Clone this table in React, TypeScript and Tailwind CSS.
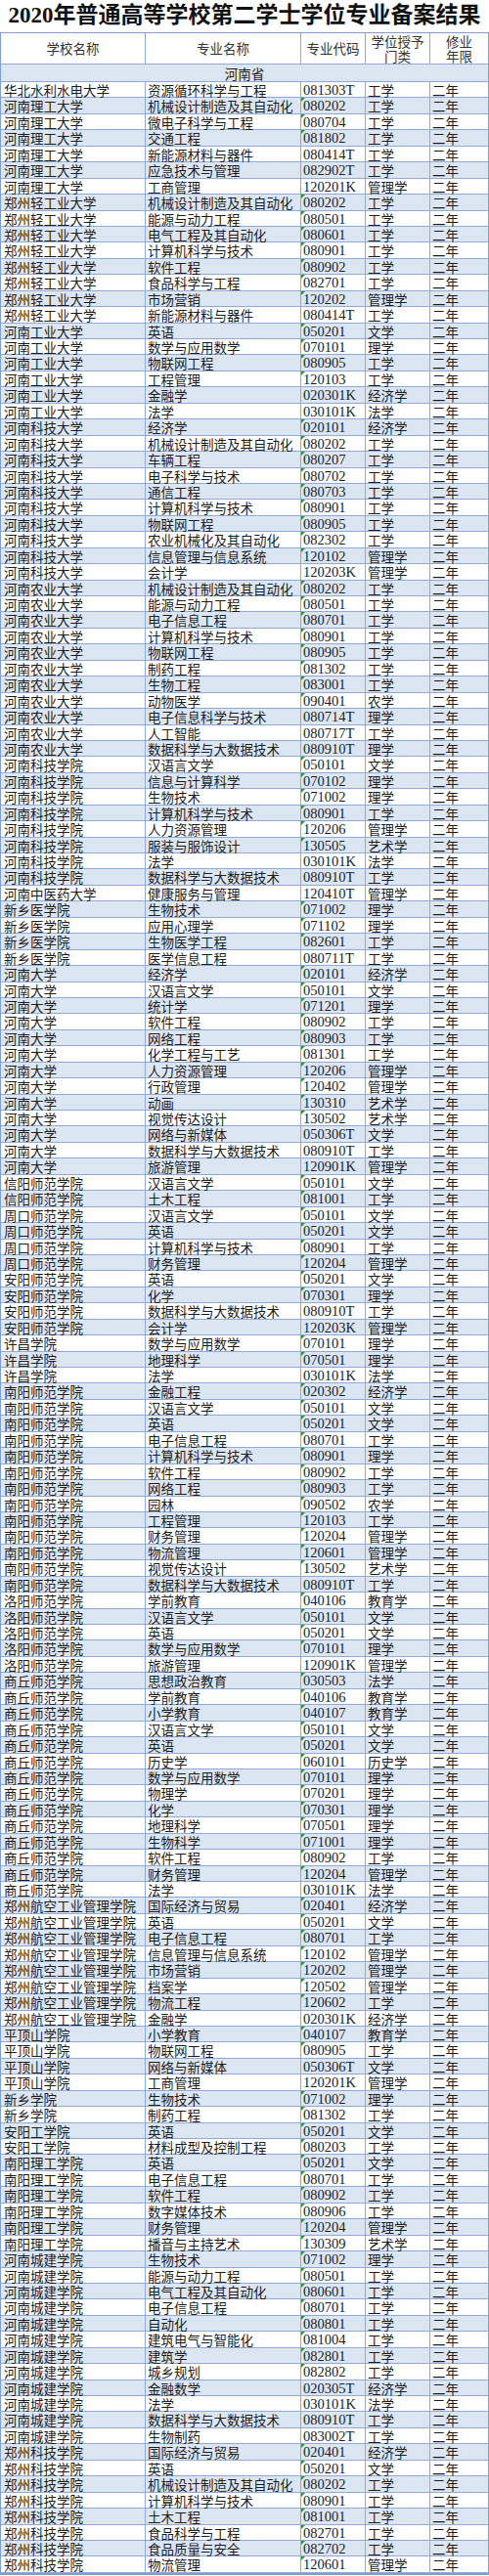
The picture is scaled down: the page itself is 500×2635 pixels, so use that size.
import React from "react";

type Row = [string, string, string, string];

// 学校 | 专业 | 代码 | 门类   (修业年限 is always 二年)
const RAW = `华北水利水电大学|资源循环科学与工程|081303T|工学
河南理工大学|机械设计制造及其自动化|080202|工学
河南理工大学|微电子科学与工程|080704|工学
河南理工大学|交通工程|081802|工学
河南理工大学|新能源材料与器件|080414T|工学
河南理工大学|应急技术与管理|082902T|工学
河南理工大学|工商管理|120201K|管理学
郑州轻工业大学|机械设计制造及其自动化|080202|工学
郑州轻工业大学|能源与动力工程|080501|工学
郑州轻工业大学|电气工程及其自动化|080601|工学
郑州轻工业大学|计算机科学与技术|080901|工学
郑州轻工业大学|软件工程|080902|工学
郑州轻工业大学|食品科学与工程|082701|工学
郑州轻工业大学|市场营销|120202|管理学
郑州轻工业大学|新能源材料与器件|080414T|工学
河南工业大学|英语|050201|文学
河南工业大学|数学与应用数学|070101|理学
河南工业大学|物联网工程|080905|工学
河南工业大学|工程管理|120103|工学
河南工业大学|金融学|020301K|经济学
河南工业大学|法学|030101K|法学
河南科技大学|经济学|020101|经济学
河南科技大学|机械设计制造及其自动化|080202|工学
河南科技大学|车辆工程|080207|工学
河南科技大学|电子科学与技术|080702|工学
河南科技大学|通信工程|080703|工学
河南科技大学|计算机科学与技术|080901|工学
河南科技大学|物联网工程|080905|工学
河南科技大学|农业机械化及其自动化|082302|工学
河南科技大学|信息管理与信息系统|120102|管理学
河南科技大学|会计学|120203K|管理学
河南农业大学|机械设计制造及其自动化|080202|工学
河南农业大学|能源与动力工程|080501|工学
河南农业大学|电子信息工程|080701|工学
河南农业大学|计算机科学与技术|080901|工学
河南农业大学|物联网工程|080905|工学
河南农业大学|制药工程|081302|工学
河南农业大学|生物工程|083001|工学
河南农业大学|动物医学|090401|农学
河南农业大学|电子信息科学与技术|080714T|理学
河南农业大学|人工智能|080717T|工学
河南农业大学|数据科学与大数据技术|080910T|理学
河南科技学院|汉语言文学|050101|文学
河南科技学院|信息与计算科学|070102|理学
河南科技学院|生物技术|071002|理学
河南科技学院|计算机科学与技术|080901|工学
河南科技学院|人力资源管理|120206|管理学
河南科技学院|服装与服饰设计|130505|艺术学
河南科技学院|法学|030101K|法学
河南科技学院|数据科学与大数据技术|080910T|工学
河南中医药大学|健康服务与管理|120410T|管理学
新乡医学院|生物技术|071002|理学
新乡医学院|应用心理学|071102|理学
新乡医学院|生物医学工程|082601|工学
新乡医学院|医学信息工程|080711T|工学
河南大学|经济学|020101|经济学
河南大学|汉语言文学|050101|文学
河南大学|统计学|071201|理学
河南大学|软件工程|080902|工学
河南大学|网络工程|080903|工学
河南大学|化学工程与工艺|081301|工学
河南大学|人力资源管理|120206|管理学
河南大学|行政管理|120402|管理学
河南大学|动画|130310|艺术学
河南大学|视觉传达设计|130502|艺术学
河南大学|网络与新媒体|050306T|文学
河南大学|数据科学与大数据技术|080910T|工学
河南大学|旅游管理|120901K|管理学
信阳师范学院|汉语言文学|050101|文学
信阳师范学院|土木工程|081001|工学
周口师范学院|汉语言文学|050101|文学
周口师范学院|英语|050201|文学
周口师范学院|计算机科学与技术|080901|工学
周口师范学院|财务管理|120204|管理学
安阳师范学院|英语|050201|文学
安阳师范学院|化学|070301|理学
安阳师范学院|数据科学与大数据技术|080910T|工学
安阳师范学院|会计学|120203K|管理学
许昌学院|数学与应用数学|070101|理学
许昌学院|地理科学|070501|理学
许昌学院|法学|030101K|法学
南阳师范学院|金融工程|020302|经济学
南阳师范学院|汉语言文学|050101|文学
南阳师范学院|英语|050201|文学
南阳师范学院|电子信息工程|080701|工学
南阳师范学院|计算机科学与技术|080901|理学
南阳师范学院|软件工程|080902|工学
南阳师范学院|网络工程|080903|工学
南阳师范学院|园林|090502|农学
南阳师范学院|工程管理|120103|工学
南阳师范学院|财务管理|120204|管理学
南阳师范学院|物流管理|120601|管理学
南阳师范学院|视觉传达设计|130502|艺术学
南阳师范学院|数据科学与大数据技术|080910T|工学
洛阳师范学院|学前教育|040106|教育学
洛阳师范学院|汉语言文学|050101|文学
洛阳师范学院|英语|050201|文学
洛阳师范学院|数学与应用数学|070101|理学
洛阳师范学院|旅游管理|120901K|管理学
商丘师范学院|思想政治教育|030503|法学
商丘师范学院|学前教育|040106|教育学
商丘师范学院|小学教育|040107|教育学
商丘师范学院|汉语言文学|050101|文学
商丘师范学院|英语|050201|文学
商丘师范学院|历史学|060101|历史学
商丘师范学院|数学与应用数学|070101|理学
商丘师范学院|物理学|070201|理学
商丘师范学院|化学|070301|理学
商丘师范学院|地理科学|070501|理学
商丘师范学院|生物科学|071001|理学
商丘师范学院|软件工程|080902|工学
商丘师范学院|财务管理|120204|管理学
商丘师范学院|法学|030101K|法学
郑州航空工业管理学院|国际经济与贸易|020401|经济学
郑州航空工业管理学院|英语|050201|文学
郑州航空工业管理学院|电子信息工程|080701|工学
郑州航空工业管理学院|信息管理与信息系统|120102|管理学
郑州航空工业管理学院|市场营销|120202|管理学
郑州航空工业管理学院|档案学|120502|管理学
郑州航空工业管理学院|物流工程|120602|工学
郑州航空工业管理学院|金融学|020301K|经济学
平顶山学院|小学教育|040107|教育学
平顶山学院|物联网工程|080905|工学
平顶山学院|网络与新媒体|050306T|文学
平顶山学院|工商管理|120201K|管理学
新乡学院|生物技术|071002|理学
新乡学院|制药工程|081302|工学
安阳工学院|英语|050201|文学
安阳工学院|材料成型及控制工程|080203|工学
南阳理工学院|英语|050201|文学
南阳理工学院|电子信息工程|080701|工学
南阳理工学院|软件工程|080902|工学
南阳理工学院|数字媒体技术|080906|工学
南阳理工学院|财务管理|120204|管理学
南阳理工学院|播音与主持艺术|130309|艺术学
河南城建学院|生物技术|071002|理学
河南城建学院|能源与动力工程|080501|工学
河南城建学院|电气工程及其自动化|080601|工学
河南城建学院|电子信息工程|080701|工学
河南城建学院|自动化|080801|工学
河南城建学院|建筑电气与智能化|081004|工学
河南城建学院|建筑学|082801|工学
河南城建学院|城乡规划|082802|工学
河南城建学院|金融数学|020305T|经济学
河南城建学院|法学|030101K|法学
河南城建学院|数据科学与大数据技术|080910T|工学
河南城建学院|生物制药|083002T|工学
郑州科技学院|国际经济与贸易|020401|经济学
郑州科技学院|英语|050201|文学
郑州科技学院|机械设计制造及其自动化|080202|工学
郑州科技学院|计算机科学与技术|080901|工学
郑州科技学院|土木工程|081001|工学
郑州科技学院|食品科学与工程|082701|工学
郑州科技学院|食品质量与安全|082702|工学
郑州科技学院|物流管理|120601|管理学`;

const ROWS: Row[] = RAW.split("\n").map((l) => l.split("|") as Row);

const cjk = { fontFamily: '"Noto Sans CJK SC", sans-serif' };
const code = { fontFamily: '"Liberation Serif", "Noto Sans CJK SC", serif' };

const GRID = "grid grid-cols-[148px_159px_66px_66px_1fr]";

function DataRow({ row, shaded }: { row: Row; shaded: boolean }) {
  const [school, major, num, cat] = row;
  // Excel's little green "number stored as text" marker
  const flagged = /^\d+$/.test(num);
  return (
    <div
      className={`${GRID} h-[16.45px] border-b border-[#8eaad8] text-[13.5px] leading-[16px] text-[#1c1c1c] ${
        shaded ? "bg-[#dce6f2]" : "bg-white"
      }`}
    >
      <div className="flex items-center pl-[3px] border-r border-[#8eaad8] whitespace-nowrap" style={cjk}>
        {school}
      </div>
      <div className="flex items-center pl-[2px] border-r border-[#8eaad8] whitespace-nowrap" style={cjk}>
        {major}
      </div>
      <div className="relative flex items-center pl-[2px] border-r border-[#8eaad8] text-[14.5px] whitespace-nowrap" style={code}>
        {flagged && (
          <span className="absolute left-0 top-0 w-0 h-0 border-t-[4px] border-r-[4px] border-t-[#2f8f3a] border-r-transparent" />
        )}
        {num}
      </div>
      <div className="flex items-center pl-[2px] border-r border-[#8eaad8] whitespace-nowrap" style={cjk}>
        {cat}
      </div>
      <div className="flex items-center pl-[2px] whitespace-nowrap" style={cjk}>
        二年
      </div>
    </div>
  );
}

export default function App() {
  return (
    <div className="w-[500px] bg-white">
      {/* title */}
      <div
        className="h-[33px] flex items-center justify-center text-[23px] font-bold text-[#111] whitespace-nowrap"
        style={{ fontFamily: '"Liberation Serif", "Noto Sans CJK SC", serif' }}
      >
        2020年普通高等学校第二学士学位专业备案结果
      </div>

      <div className="border border-[#7f9fd0] border-b-[2px]">
        {/* header */}
        <div className={`${GRID} h-[32px] border-b border-[#8eaad8] text-[13.5px] leading-[15px] text-[#333]`} style={cjk}>
          <div className="flex items-center justify-center border-r border-[#8eaad8]">学校名称</div>
          <div className="flex items-center justify-center border-r border-[#8eaad8]">专业名称</div>
          <div className="flex items-center justify-center border-r border-[#8eaad8]">专业代码</div>
          <div className="flex flex-col items-center justify-center border-r border-[#8eaad8] whitespace-nowrap">
            <span>学位授予</span>
            <span>门类</span>
          </div>
          <div className="flex flex-col items-center justify-center">
            <span>修业</span>
            <span>年限</span>
          </div>
        </div>

        {/* province */}
        <div
          className="h-[18px] flex items-center justify-center border-b border-[#8eaad8] bg-[#dce6f2] text-[13.5px] leading-[16px] text-[#1c1c1c]"
          style={cjk}
        >
          河南省
        </div>

        {ROWS.map((r, i) => (
          <DataRow key={i} row={r} shaded={i % 2 === 1} />
        ))}
      </div>
    </div>
  );
}
